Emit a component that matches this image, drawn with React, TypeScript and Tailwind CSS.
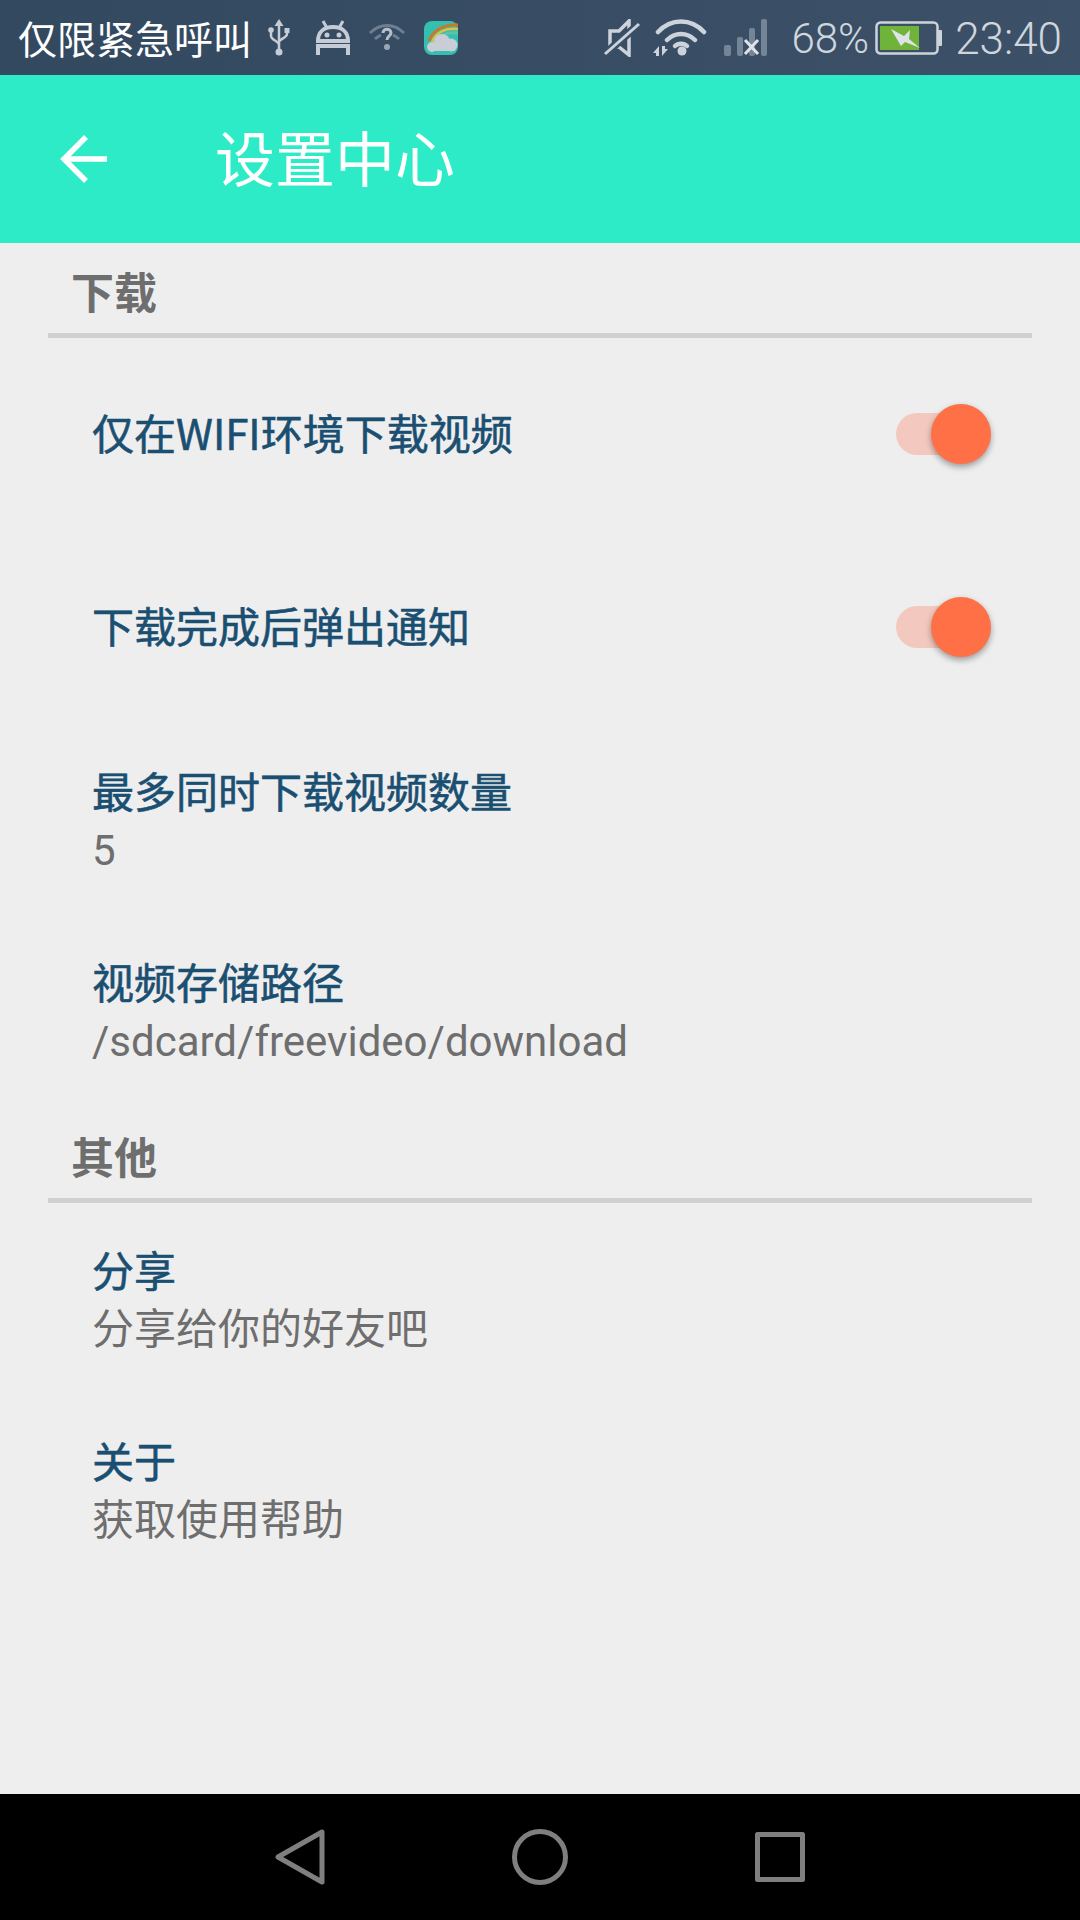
const FONT = "[font-family:'Noto_Sans_CJK_SC','Roboto',sans-serif]";

function StatusIcons() {
  return (
    <div className="flex items-center">
      {/* usb */}
      <svg width="22" height="37" viewBox="0 0 22 37" className="ml-[16px]" fill="none" stroke="#c5ccd6" strokeWidth="2.5">
        <path d="M11 5v28M3 12v5c0 4 8 5 8 9M19 12v3c0 4-8 5-8 8" />
        <path d="M11 0l4.5 7h-9z" fill="#c5ccd6" stroke="none" />
        <circle cx="11" cy="33" r="3.5" fill="#c5ccd6" stroke="none" />
        <circle cx="3" cy="11" r="2.8" fill="#c5ccd6" stroke="none" />
        <rect x="16.5" y="9" width="5" height="5" fill="#c5ccd6" stroke="none" />
      </svg>
      {/* android debug */}
      <svg width="34" height="35" viewBox="0 0 34 35" className="ml-[26px]" fill="none" stroke="#c5ccd6">
        <path d="M2 21C2 12 8 7 17 7s15 5 15 14z" strokeWidth="4" />
        <path d="M7 1l4 7M27 1l-4 7" strokeWidth="3" />
        <circle cx="11" cy="15" r="2.5" fill="#c5ccd6" stroke="none" />
        <circle cx="23" cy="15" r="2.5" fill="#c5ccd6" stroke="none" />
        <path d="M2 35V26h30v9" strokeWidth="4" />
      </svg>
      {/* wifi question */}
      <svg width="36" height="28" viewBox="0 0 36 28" className="ml-[19px]" fill="none" stroke="#6f7f91" strokeWidth="3">
        <path d="M1 9c10-10 24-10 34 0M6 15c2-2 4-3 6-4M30 15c-2-2-4-3-6-4" />
        <path d="M14 9c0-5 8-5 8 0 0 3-4 3-4 7" stroke="#b6bfca" />
        <circle cx="18" cy="23" r="3" fill="#9aa6b4" stroke="none" />
      </svg>
      {/* weather app */}
      <svg width="34" height="34" viewBox="0 0 34 34" className="ml-[19px]">
        <rect width="34" height="34" rx="8" fill="#35bfb0" />
        <path d="M5 20C9 9 20 3 34 4" fill="none" stroke="#c9782c" strokeWidth="3" />
        <path d="M8 21C12 12 21 7 34 8" fill="none" stroke="#d9c24a" strokeWidth="2.5" />
        <path d="M11 22C15 15 23 11 34 12" fill="none" stroke="#5cc4a8" strokeWidth="3" />
        <circle cx="8" cy="26" r="5" fill="#c9ced6" />
        <circle cx="18" cy="21" r="8" fill="#c9ced6" />
        <circle cx="27" cy="24" r="6.5" fill="#c9ced6" />
        <rect x="5" y="25" width="26" height="5" fill="#c9ced6" />
      </svg>
    </div>
  );
}

function StatusRight() {
  return (
    <div className="flex items-center text-[#d0d6dd]">
      {/* muted speaker */}
      <svg width="36" height="38" viewBox="0 0 36 38" fill="none" stroke="#cdd3da" strokeWidth="3.5">
        <path d="M25 2v34L15 28H6V12h9z" />
        <path d="M1 35L35 5" stroke="#3a5066" strokeWidth="8" />
        <path d="M1 35L35 5" strokeWidth="3" />
      </svg>
      {/* wifi */}
      <svg width="54" height="38" viewBox="0 0 54 38" className="ml-[13px]" fill="none" stroke="#cdd3da" strokeWidth="4.5" strokeLinecap="round">
        <path d="M5 13c13-14 33-14 46 0M14 21c8-8 20-8 28 0" />
        <path d="M22 27c3-3 9-3 12 0" />
        <circle cx="29" cy="32" r="4.5" fill="#cdd3da" stroke="none" />
        <path d="M6 37v-10l-6 7h3v3zM9 27v10l6-7h-3v-3z" fill="#cdd3da" stroke="none" />
      </svg>
      {/* signal */}
      <svg width="43" height="37" viewBox="0 0 43 37" className="ml-[17px]">
        <rect x="0" y="26" width="7" height="11" rx="2" fill="#748597" />
        <rect x="13" y="18" width="6" height="19" rx="2" fill="#748597" />
        <rect x="25" y="9" width="6" height="28" rx="2" fill="#748597" />
        <rect x="37" y="0" width="6" height="37" rx="2" fill="#748597" />
        <path d="M21 21l13 14M34 21L21 35" stroke="#dfe3e8" strokeWidth="3" />
      </svg>
      <span className="mt-[2px] ml-[24px] text-[42px] leading-none [font-family:'Roboto',sans-serif] font-light">68%</span>
      <svg width="68" height="34" viewBox="0 0 68 34" className="ml-[6px]" fill="none">
        <rect x="1.5" y="1.5" width="61" height="31" rx="4" stroke="#cdd3da" strokeWidth="2.5" />
        <rect x="5" y="5" width="39" height="24" fill="#6fb33b" />
        <rect x="63" y="9" width="4" height="16" rx="1" fill="#cdd3da" />
        <path d="M16 8l13 7 6-6-1 9 11 9-15-6-4 4z" fill="#dfe3e8" />
      </svg>
      <span className="mt-[2px] ml-[12px] text-[44px] leading-none [font-family:'Roboto',sans-serif] font-light">23:40</span>
    </div>
  );
}

function SectionHeader({ title }: { title: string }) {
  return (
    <div>
      <div className="h-[90px] pl-[71px] pt-[17px] text-[43px] leading-[60px] font-bold text-[#6e6e6e]">{title}</div>
      <div className="mx-[48px] h-[5px] bg-[#d0d0d0]" />
    </div>
  );
}

function SwitchRow({ title, className }: { title: string; className: string }) {
  return (
    <div className={`flex h-[60px] items-center justify-between pl-[92px] pr-[89px] ${className}`}>
      <span className="mb-[5px] text-[42px] leading-[60px] text-[#1b4f72] [-webkit-text-stroke:0.6px_#1b4f72]">{title}</span>
      <div className="relative h-[42px] w-[95px]">
        <div className="absolute left-0 top-0 h-[42px] w-[70px] rounded-full bg-[#f3c9bf]" />
        <div className="absolute right-0 top-[-9px] h-[60px] w-[60px] rounded-full bg-[#ff7047] shadow-[0_3px_6px_rgba(0,0,0,0.35)]" />
      </div>
    </div>
  );
}

function TextRow({ title, sub, className }: { title: string; sub: string; className: string }) {
  return (
    <div className={`pl-[92px] ${className}`}>
      <div className="text-[42px] leading-[61px] text-[#1b4f72] [-webkit-text-stroke:0.6px_#1b4f72]">{title}</div>
      <div className="text-[42px] leading-[61px] text-[#6e6e6e] [font-family:'Roboto','Noto_Sans_CJK_SC',sans-serif]">{sub}</div>
    </div>
  );
}

export default function App() {
  return (
    <div className={`flex h-[1920px] w-[1080px] flex-col overflow-hidden bg-[#eeeeee] ${FONT}`}>
      <div className="flex h-[75px] items-center justify-between bg-gradient-to-r from-[#33495f] to-[#3c5168] pl-[18px] pr-[18px]">
        <div className="flex items-center">
          <span className="text-[39px] leading-none text-white">仅限紧急呼叫</span>
          <StatusIcons />
        </div>
        <StatusRight />
      </div>

      <div className="flex h-[168px] items-center bg-[#2eebc7] pl-[60px] text-white">
        <svg width="47" height="48" viewBox="0 0 47 48" fill="none" stroke="white" strokeWidth="5.5">
          <path d="M47 24H4M26 2L4 24l22 22" />
        </svg>
        <span className="-mt-[7px] ml-[108px] text-[60px] leading-none">设置中心</span>
      </div>

      <SectionHeader title="下载" />
      <SwitchRow title="仅在WIFI环境下载视频" className="mt-[66px]" />
      <SwitchRow title="下载完成后弹出通知" className="mt-[133px]" />
      <TextRow title="最多同时下载视频数量" sub="5" className="mt-[102px]" />
      <TextRow title="视频存储路径" sub="/sdcard/freevideo/download" className="mt-[69px]" />

      <div className="mt-[36px]">
        <SectionHeader title="其他" />
      </div>
      <TextRow title="分享" sub="分享给你的好友吧" className="mt-[35px]" />
      <TextRow title="关于" sub="获取使用帮助" className="mt-[69px]" />

      <div className="mt-auto flex h-[126px] items-center bg-black pl-[275px]">
        <svg width="50" height="56" viewBox="0 0 50 56" fill="none" stroke="#7f7f7f" strokeWidth="5" strokeLinejoin="round">
          <path d="M3 28L47 3v50z" />
        </svg>
        <svg width="56" height="56" viewBox="0 0 56 56" className="ml-[187px]" fill="none" stroke="#7f7f7f" strokeWidth="5">
          <circle cx="28" cy="28" r="25.5" />
        </svg>
        <svg width="50" height="50" viewBox="0 0 50 50" className="ml-[187px]" fill="none" stroke="#7f7f7f" strokeWidth="5" strokeLinejoin="round">
          <rect x="2.5" y="2.5" width="45" height="45" />
        </svg>
      </div>
    </div>
  );
}
